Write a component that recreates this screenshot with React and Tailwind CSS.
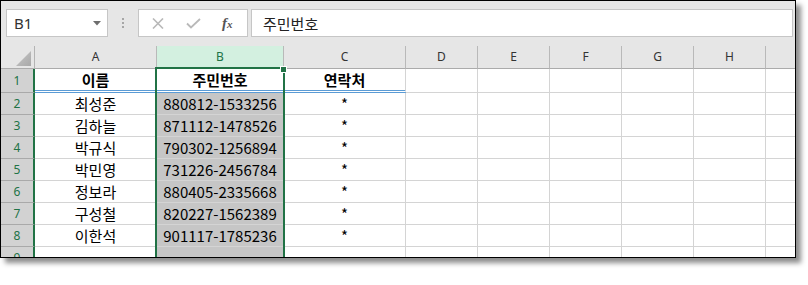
import React from "react";

const COLS = [
  { k: "A", w: "w-[122px]" },
  { k: "B", w: "w-[127px]" },
  { k: "C", w: "w-[122px]" },
  { k: "D", w: "w-[72px]" },
  { k: "E", w: "w-[72px]" },
  { k: "F", w: "w-[72px]" },
  { k: "G", w: "w-[72px]" },
  { k: "H", w: "w-[72px]" },
];

const DATA = [
  ["이름", "주민번호", "연락처"],
  ["최성준", "880812-1533256", "*"],
  ["김하늘", "871112-1478526", "*"],
  ["박규식", "790302-1256894", "*"],
  ["박민영", "731226-2456784", "*"],
  ["정보라", "880405-2335668", "*"],
  ["구성철", "820227-1562389", "*"],
  ["이한석", "901117-1785236", "*"],
  ["", "", ""],
];

const KR = { fontFamily: '"Noto Sans CJK KR", "Noto Sans", sans-serif' };
const UI = { fontFamily: '"Noto Sans", "Open Sans", sans-serif' };

function Row({ idx, cells }) {
  const first = idx === 0;
  const h = first ? "h-[24px]" : "h-[22px]";
  return (
    <div className={`flex ${h}`}>
      <div
        className="w-[34px] shrink-0 bg-[#d2d2d2] border-b border-b-[#a9a9a9] border-r-2 border-r-[#217346] flex items-center justify-center text-[12px] text-[#217346] leading-none"
        style={UI}
      >
        {idx + 1}
      </div>
      {COLS.map((c, ci) => {
        const text = ci < 3 ? cells[ci] : "";
        const isB = ci === 1;
        const bg = isB && !first ? "bg-[#c6c6c6]" : "bg-white";
        const bottom =
          first && ci < 3
            ? "border-b-[3px] border-double border-b-[#5b9bd5]"
            : "border-b border-b-[#d4d4d4]";
        return (
          <div
            key={c.k}
            className={`${c.w} shrink-0 ${bg} ${bottom} border-r border-r-[#d4d4d4] flex items-center justify-center leading-none text-[15px] text-black ${first ? "font-bold" : ""}`}
            style={KR}
          >
            {text}
          </div>
        );
      })}
      <div className="flex-1 bg-white border-b border-b-[#d4d4d4]" />
    </div>
  );
}

export default function App() {
  return (
    <div className="w-[808px] h-[285px] bg-white">
      <div className="w-[796px] h-[258px] border border-black bg-[#e6e6e6] shadow-[5px_5px_5px_rgba(0,0,0,0.45)] overflow-hidden relative">
        {/* top strip */}
        <div className="h-[8px]" />
        {/* formula bar */}
        <div className="flex h-[28px]">
          <div className="ml-[5px] w-[102px] bg-white border border-[#c6c6c6] flex items-center justify-between pl-[7px] pr-[6px]">
            <span className="text-[15px] text-[#333] leading-none" style={UI}>
              B1
            </span>
            <svg width="8" height="5" viewBox="0 0 8 5">
              <path d="M0 0 H8 L4 4.5 Z" fill="#6e6e6e" />
            </svg>
          </div>
          <div className="w-[30px] flex flex-col items-center justify-center gap-[2px]">
            <div className="w-[2px] h-[2px] bg-[#a6a6a6]" />
            <div className="w-[2px] h-[2px] bg-[#a6a6a6]" />
            <div className="w-[2px] h-[2px] bg-[#a6a6a6]" />
          </div>
          <div className="w-[110px] bg-white border border-[#c6c6c6] flex items-center">
            <svg className="ml-[13px]" width="12" height="11" viewBox="0 0 12 11">
              <path d="M1 0.5 L11 10.5 M11 0.5 L1 10.5" stroke="#b9b9b9" strokeWidth="1.6" />
            </svg>
            <svg className="ml-[22px]" width="15" height="11" viewBox="0 0 15 11">
              <path d="M1 5.5 L5 9.5 L14 1" stroke="#b9b9b9" strokeWidth="1.8" fill="none" />
            </svg>
            <span
              className="ml-[21px] italic font-bold text-[15px] text-[#555] leading-none"
              style={{ fontFamily: '"Liberation Serif", serif' }}
            >
              f<span className="text-[11px]">x</span>
            </span>
          </div>
          <div className="ml-[3px] mr-[2px] flex-1 bg-white border border-[#c6c6c6] flex items-center pl-[11px]">
            <span className="text-[15px] text-[#222] leading-none" style={KR}>
              주민번호
            </span>
          </div>
        </div>
        <div className="h-[9px]" />
        {/* column header */}
        <div className="flex h-[23px]">
          <div className="w-[34px] shrink-0 border-r border-r-[#b4b4b4] border-b border-b-[#ababab] flex items-end justify-end pr-[3px] pb-[2px]">
            <svg width="15" height="15" viewBox="0 0 15 15">
              <defs>
                <linearGradient id="tri" x1="0" y1="0" x2="1" y2="1">
                  <stop offset="0" stopColor="#c8c8c8" />
                  <stop offset="1" stopColor="#a8a8a8" />
                </linearGradient>
              </defs>
              <path d="M15 0 V15 H0 Z" fill="url(#tri)" />
            </svg>
          </div>
          {COLS.map((c) => {
            const sel = c.k === "B";
            return (
              <div
                key={c.k}
                className={`${c.w} shrink-0 border-r border-r-[#b9b9b9] border-b border-b-[#ababab] flex items-center justify-center text-[12px] leading-none ${sel ? "bg-[#d3f0e0] text-[#217346]" : "text-[#333]"}`}
                style={UI}
              >
                {c.k}
              </div>
            );
          })}
          <div className="flex-1 border-b border-b-[#ababab]" />
        </div>
        {/* rows */}
        {DATA.map((r, i) => (
          <Row key={i} idx={i} cells={r} />
        ))}
        {/* selection overlay */}
        <div className="absolute left-[154px] top-[66px] w-[130px] h-[220px] border-2 border-[#217346]" />
        <div className="absolute left-[279px] top-[65px] w-[7px] h-[7px] bg-[#217346] border border-white" />
      </div>
    </div>
  );
}
